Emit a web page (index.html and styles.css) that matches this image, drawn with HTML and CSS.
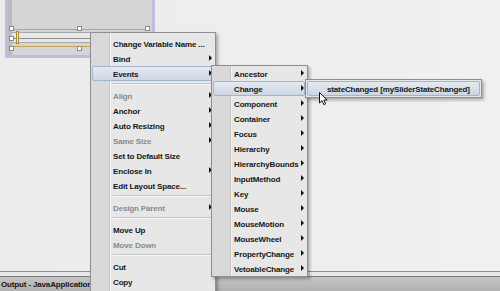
FILE: index.html
```html
<!DOCTYPE html>
<html>
<head>
<link rel="stylesheet" href="styles.css">
</head>
<body>
	<div class="workspace">
		<div class="form-frame">
			<div class="form-panel">
				<div class="slider-sel">
					<div class="slider-track"><span class="slider-thumb"></span></div>
					<span class="handle h-tl"></span>
					<span class="handle h-tm"></span>
					<span class="handle h-tr"></span>
					<span class="handle h-ml"></span>
					<span class="handle h-bl"></span>
					<span class="handle h-bm"></span>
					<span class="handle h-br"></span>
				</div>
			</div>
		</div>
	</div>
	<div class="output"><span class="output-tab">Output - JavaApplication</span></div>

	<div class="menu menu-main">
		<div class="item">Change Variable Name ...</div>
		<div class="item sub">Bind</div>
		<div class="item sub active">Events</div>
		<div class="sep"></div>
		<div class="item sub off">Align</div>
		<div class="item sub">Anchor</div>
		<div class="item sub">Auto Resizing</div>
		<div class="item sub off">Same Size</div>
		<div class="item">Set to Default Size</div>
		<div class="item sub">Enclose In</div>
		<div class="item">Edit Layout Space...</div>
		<div class="sep"></div>
		<div class="item sub off">Design Parent</div>
		<div class="sep"></div>
		<div class="item">Move Up</div>
		<div class="item off">Move Down</div>
		<div class="sep"></div>
		<div class="item">Cut</div>
		<div class="item">Copy</div>
	</div>

	<div class="menu menu-events">
		<div class="item sub">Ancestor</div>
		<div class="item sub active">Change</div>
		<div class="item sub">Component</div>
		<div class="item sub">Container</div>
		<div class="item sub">Focus</div>
		<div class="item sub">Hierarchy</div>
		<div class="item sub">HierarchyBounds</div>
		<div class="item sub">InputMethod</div>
		<div class="item sub">Key</div>
		<div class="item sub">Mouse</div>
		<div class="item sub">MouseMotion</div>
		<div class="item sub">MouseWheel</div>
		<div class="item sub">PropertyChange</div>
		<div class="item sub">VetoableChange</div>
	</div>

	<div class="menu menu-change">
		<div class="item active">stateChanged [mySliderStateChanged]</div>
	</div>

	<svg class="cursor" width="10" height="14" viewBox="0 0 10 14">
		<path d="M0.5 0.5 L0.5 11 L3 8.6 L4.8 12.6 L6.6 11.8 L4.9 8 L8.2 8 Z" fill="#fff" stroke="#111" stroke-width="1" stroke-linejoin="round"/>
	</svg>
</body>
</html>
```

FILE: styles.css
```css
body {
	margin: 0;
	width: 500px;
	height: 291px;
	overflow: hidden;
	position: relative;
	display: flex;
	flex-direction: column;
	background: #e9e9e9;
	color: #161616;
	font-family: "Liberation Sans", Arial, sans-serif;
	font-size: 8px;
	font-weight: bold;
	letter-spacing: -0.15px;
}

/* designer canvas */
.workspace {
	height: 271px;
	flex: none;
	border-bottom: 1px solid #8e8e8e;
	background: linear-gradient(to right, #ececec, #f0f0f0);
}
.form-frame {
	margin-left: 5px;
	width: 150px;
	height: 58px;
	padding: 0 3px 3px;
	box-sizing: border-box;
	background: #bdbddd;
}
.form-panel {
	height: 100%;
	background: #d5d5d5;
	border-left: 4px solid #bcbcbc;
	padding-top: 29px;
	box-sizing: border-box;
}
.slider-sel {
	position: relative;
	width: 136px;
	height: 18px;
	box-sizing: border-box;
	border-top: 1px solid #c9a452;
	border-bottom: 1px solid #c9a452;
	padding-top: 2px;
}
.slider-track {
	height: 11px;
	background: linear-gradient(#e8e8e8 0 5px, #8e8e8e 5px 6px, #e8e8e8 6px);
	border-top: 1px solid #a9a9a9;
	border-bottom: 1px solid #a9a9a9;
	box-sizing: border-box;
}
.slider-thumb {
	display: block;
	margin-left: 4px;
	width: 3px;
	height: 13px;
	margin-top: -2px;
	background: #efe6c8;
	border: 1px solid #a88838;
	box-sizing: border-box;
}
.handle {
	position: absolute;
	width: 5px;
	height: 5px;
	box-sizing: border-box;
	background: #fff;
	border: 1px solid #8a8a8a;
}
.h-tl { left: -3px; top: -4px; }
.h-tm { left: 65px; top: -4px; }
.h-tr { left: 133px; top: -4px; }
.h-ml { left: -3px; top: 6px; }
.h-bl { left: -3px; top: 16px; }
.h-bm { left: 65px; top: 16px; }
.h-br { left: 133px; top: 16px; }

.output {
	margin-top: 4px;
	height: 15px;
	flex: none;
	box-sizing: border-box;
	border-top: 1px solid #7c7c7c;
	background: linear-gradient(#c4c4c4, #b2b2b2);
	display: flex;
	align-items: center;
}
.output-tab {
	padding-left: 1px;
	color: #151515;
}

/* popup menus */
.menu {
	position: absolute;
	box-sizing: border-box;
	border: 1px solid #8f8f8f;
	background: linear-gradient(to right, #d9d9d9 0 18px, #c6c6c6 18px 19px, #f4f4f4 19px 20px, #e7e7e7 20px);
	box-shadow: 2px 2px 3px rgba(0, 0, 0, 0.3);
}
.menu-main {
	left: 90px;
	top: 32px;
	width: 126px;
	height: 270px;
	padding-top: 3px;
}
.menu-events {
	left: 211px;
	top: 65px;
	width: 97px;
	height: 212px;
}
.menu-change {
	left: 305px;
	top: 79px;
	width: 177px;
	height: 19px;
	padding-top: 1px;
	background: #e7e7e7;
}
.item {
	position: relative;
	height: 15px;
	line-height: 15px;
	padding-top: 1px;
	margin: 0 2px 0 1px;
	padding-left: 21px;
	box-sizing: border-box;
	white-space: nowrap;
}
.menu-change .item {
	margin: 0 1px;
	padding-left: 20px;
}
.item.active {
	line-height: 13px;
	padding-left: 20px;
	border: 1px solid #a3b3ca;
	border-radius: 2px;
	background: linear-gradient(#e4eaf2, #ccd6e3);
}
.menu-change .item.active {
	padding-left: 19px;
}
.item.off {
	color: #8a8a8a;
}
.item.sub::after {
	content: "";
	position: absolute;
	right: 1px;
	top: 4px;
	border-left: 3px solid #111;
	border-top: 3px solid transparent;
	border-bottom: 3px solid transparent;
}
.item.active.sub::after {
	top: 3px;
	right: 0;
}
.sep {
	height: 1px;
	margin: 2px 2px 3px 22px;
	background: #c6c6c6;
	border-bottom: 1px solid #f7f7f7;
}

.cursor {
	position: absolute;
	left: 319px;
	top: 92px;
}
```
